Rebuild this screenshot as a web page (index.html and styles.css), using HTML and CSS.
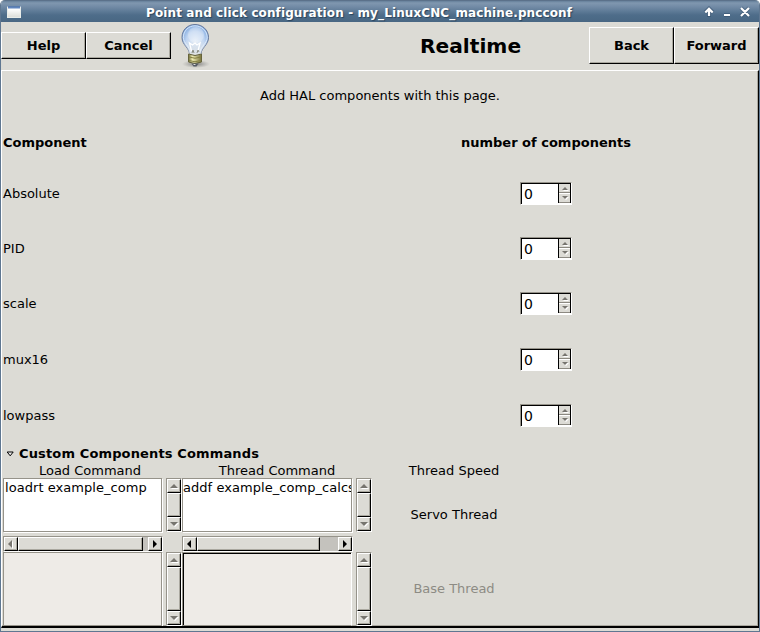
FILE: index.html
```html
<!DOCTYPE html>
<html lang="en">
<head>
<meta charset="utf-8">
<title>Point and click configuration</title>
<link rel="stylesheet" href="styles.css">
</head>
<body>
<div class="window">
  <header class="titlebar">
    <span class="winicon"></span>
    <span class="caption">Point and click configuration - my_LinuxCNC_machine.pncconf</span>
    <svg class="controls" width="50" height="22" viewBox="0 0 50 22" fill="none">
      <g stroke="#2c4763" stroke-width="4" opacity=".45"><path d="M9 16V9M5 11.500 9 7.500l4 4M24 14h6M41 7l8 8M49 7l-8 8"/></g>
      <g stroke="#fff" stroke-width="2.200"><path d="M9 15V8M5.300 11.500 9 7.800l3.700 3.700M24 14h6M41 7l8 8M49 7l-8 8"/></g>
    </svg>
  </header>
  <nav class="toolbar">
    <button class="btn">Help</button>
    <button class="btn">Cancel</button>
    <svg class="bulb" width="32" height="46" viewBox="0 0 32 46">
      <defs>
        <radialGradient id="glass" cx=".5" cy=".55" r=".6"><stop offset="0" stop-color="#e4edf8"/><stop offset=".55" stop-color="#c0d5f1"/><stop offset="1" stop-color="#719fdb"/></radialGradient>
        <linearGradient id="fade" x2="0" y2="1"><stop offset=".5" stop-color="#e3e5e5" stop-opacity="0"/><stop offset="1" stop-color="#e3e5e5"/></linearGradient>
        <linearGradient id="brass"><stop stop-color="#6e6c39"/><stop offset=".3" stop-color="#f0edb4"/><stop offset="1" stop-color="#77723c"/></linearGradient>
        <radialGradient id="shade"><stop stop-color="#555" stop-opacity=".7"/><stop offset="1" stop-color="#777" stop-opacity="0"/></radialGradient>
      </defs>
      <ellipse cx="17" cy="41" rx="14" ry="4" fill="url(#shade)"/>
      <path d="M10.500 31C10.500 25 3 22 3 14.500C3 7 8.500 1.500 16 1.500S29.500 7 29.500 14.500C29.500 22 22 25 22 31Q16 33.500 10.500 31Z" fill="url(#glass)" stroke="#65779a"/>
      <path d="M10.500 31C10.500 25 3 22 3 14.500C3 7 8.500 1.500 16 1.500S29.500 7 29.500 14.500C29.500 22 22 25 22 31Q16 33.500 10.500 31Z" fill="url(#fade)"/>
      <path d="M11.500 29C11 24 4.300 20 4.300 14.500C4.300 8 9.500 2.800 16 2.800S28.200 8 28.200 14.500C28.200 20 21.500 24 21 29" fill="none" stroke="#eaf4ff" opacity=".75"/>
      <ellipse cx="17" cy="12" rx="8" ry="8" fill="#fff" opacity=".25"/>
      <path d="M12.500 28l-2-8 3 2 2.500-2 2 2 3-2-2 8" fill="none" stroke="#fff" stroke-width="1.300"/>
      <path d="M13 30l1-3 1 3M18 30l1-3 1 2" fill="none" stroke="#8a8d83"/>
      <path d="M9.500 31Q16 34 22.500 31V39Q16 42 9.500 39Z" fill="url(#brass)" stroke="#66633a"/>
      <path d="M10 34Q16 36.500 22 34M10 37.500Q16 40 22 37.500" fill="none" stroke="#858143"/>
      <path d="M12.500 40.500h7l-2 3h-3z" fill="#555b65"/><path d="M14.500 41.500h2" stroke="#ddd"/>
    </svg>
    <h1 class="page-title">Realtime</h1>
    <button class="btn tall">Back</button>
    <button class="btn tall">Forward</button>
  </nav>
  <main class="page">
    <p class="intro">Add HAL components with this page.</p>
    <div class="row head"><b>Component</b><b>number of components</b></div>
    <div class="row"><span>Absolute</span><div class="spin"><span>0</span><i></i></div></div>
    <div class="row"><span>PID</span><div class="spin"><span>0</span><i></i></div></div>
    <div class="row"><span>scale</span><div class="spin"><span>0</span><i></i></div></div>
    <div class="row r57"><span>mux16</span><div class="spin"><span>0</span><i></i></div></div>
    <div class="row last"><span>lowpass</span><div class="spin"><span>0</span><i></i></div></div>
    <div class="expander"><svg width="9" height="7" viewBox="0 0 9 7"><path d="M1.200 1h6L4.200 4.800z" fill="#eee" stroke="#000"/></svg><b>Custom Components Commands</b></div>
    <div class="commands">
      <span class="label w1">Load Command</span><span class="label w3">Thread Command</span><span class="label c5">Thread Speed</span>
      <div class="list c1 r2">loadrt example_comp</div>
      <div class="vbar c2 r2"><i class="up"></i><i class="thumb"></i><i class="down"></i></div>
      <div class="list c3 r2 scrolled"><span>addf example_comp_calcs</span></div>
      <div class="vbar c4 r2"><i class="up"></i><i class="thumb"></i><i class="down"></i></div>
      <span class="c5 servo">Servo Thread</span>
      <div class="hbar c1 r3"><i class="left off"></i><i class="thumb t1"></i><i class="right"></i></div>
      <div class="hbar c3 r3"><i class="left"></i><i class="thumb t2"></i><i class="right"></i></div>
      <div class="list off c1 r4"></div>
      <div class="vbar c2 r4"><i class="up"></i><i class="thumb"></i><i class="down"></i></div>
      <div class="list off focus c3 r4"></div>
      <div class="vbar c4 r4"><i class="up"></i><i class="thumb"></i><i class="down"></i></div>
      <span class="c5 r4 base">Base Thread</span>
    </div>
  </main>
</div>
</body>
</html>
```
FILE: styles.css
```css
* { box-sizing: border-box; }
html { background: #fff; }
body { margin: 0; font: 13px/16px "DejaVu Sans", sans-serif; color: #000; }
.window { width: 760px; height: 632px; border: solid #5f7791; border-width: 0 1px 1px; background: #dcdbd5; border-radius: 5px 5px 0 0; overflow: hidden; }
.titlebar { height: 22px; margin: 0 -1px; display: flex; align-items: center; background: linear-gradient(#66809b 0, #8097af 2px, #718aa5 6px, #4e6d8a 14px, #496783 100%); border-top: 1px solid #5b718a; color: #fff; }
.winicon { width: 14px; height: 12px; margin-left: 7px; background: linear-gradient(#6085bd 0 1px, #fff 2px, #dedfda); border: 1px solid #e8ece9; border-top-color: #597cae; }
.caption { flex: 1; margin-left: 125px; font-size: 12px; letter-spacing: .11px; font-weight: bold; white-space: nowrap; text-shadow: 1px 1px 1px #29435c; padding-top: 2px; }
.controls { margin-right: 10px; }
.toolbar { height: 48px; display: flex; }
.btn { width: 85px; height: 27px; margin: 10px 0 0; padding: 0; font: bold 13px/16px "DejaVu Sans", sans-serif; color: #000; background: #dcdbd5; border: 1px solid; border-color: #fff #000 #000 #fff; box-shadow: inset -1px -1px #aaa89f; }
.btn.tall { height: 37px; margin-top: 5px; }
.bulb { margin: 1px 0 0 8px; }
.page-title { margin: 14px auto 0 209px; font: bold 20.2px/20px "DejaVu Sans", sans-serif; }
.page { height: 558px; border: solid; border-width: 1px 1px 2px 1px; border-color: #fff #000 #000 #fff; box-shadow: inset -1px -1px #aaa89f; padding: 0 1px; overflow: hidden; }
.intro { margin: 17px 0 0; text-align: center; }
.row { height: 55px; display: grid; grid-template-columns: 332px 1fr; align-items: center; }
.row > :last-child { margin-left: 185px; }
.row.head { height: 16px; margin: 31px 0 15px; }
.row.head > :last-child { margin-left: 126px; }
.row.r57 { height: 57px; }
.row.last { margin-bottom: 3px; }
.spin { width: 52px; height: 23px; border: 1px solid; border-color: #96938a #fff #fff #96938a; background: #fff; display: flex; line-height: 20px; box-shadow: inset 1px 1px #000; padding: 1px 0 0 1px; }
.spin span { width: 36px; padding-left: 2px; font-size: 14px; }
.spin i { width: 13px; height: 19px; border: solid #000; border-width: 0 1px; background: linear-gradient(#dcdbd5 0 8px, #8c8981 8px 9px, #fff 9px 10px, #dcdbd5 10px 18px, #8c8981 18px); position: relative; }
.spin i::before, .spin i::after { content: ""; position: absolute; left: 3px; border: solid transparent; border-width: 0 3px; }
.spin i::before { top: 3px; border-bottom: 3px solid #77756f; filter: drop-shadow(1px 1px #fff); }
.spin i::after { top: 12px; border-top: 3px solid #77756f; filter: drop-shadow(1px 1px #fff); }
.expander { display: flex; align-items: center; height: 16px; padding-left: 3px; gap: 4px; letter-spacing: .14px; }
.commands { display: grid; grid-template-columns: 160px 3px 16px 171px 3px 16px 164px; grid-template-rows: 16px 54px 4px 16px 74px; }
.c1 { grid-column: 1; } .c2 { grid-column: 3; } .c3 { grid-column: 4; } .c4 { grid-column: 6; } .c5 { grid-column: 7; }
.w1 { grid-column: 1 / 4; padding-right: 5px; } .w3 { grid-column: 4 / 7; }
.r2 { grid-row: 2; } .r3 { grid-row: 4; } .r4 { grid-row: 5; }
.label { grid-row: 1; text-align: center; line-height: 17px; }
.list { border: 1px solid #96938a; background: #fff; overflow: hidden; white-space: nowrap; padding: 1px; letter-spacing: .05px; margin-right: 1px; box-shadow: 1px 1px #fff; }
.list.scrolled { padding-left: 0; }
.list.off { background: #eeebe7; }
.list.focus { box-shadow: inset 1px 1px #000; border-right-color: #fff; }
.vbar, .hbar { display: flex; background: #c4c2bd; border: 1px solid; border-color: #96938a #fff #fff #96938a; }
.vbar { flex-direction: column; }
.vbar i, .hbar i { background: #dcdbd5; border: 1px solid; border-color: #fff #000 #000 #fff; box-shadow: inset -1px -1px #aaa89f; flex: none; }
.vbar .thumb { flex: 1; }
.up, .down { height: 14px; }
.left, .right { width: 14px; }
.up::before, .down::before, .left::before, .right::before { content: ""; display: block; width: 0; border: 4px solid transparent; }
.up::before, .down::before { border-width: 0 4px; margin: 4px 0 0 2px; filter: drop-shadow(1px 1px #fff); }
.up::before { border-bottom: 4px solid #77756f; }
.down::before { border-top: 4px solid #77756f; }
.left::before { border-right-color: #000; border-left: 0; margin: 2px 0 0 3px; }
.left.off::before { border-right-color: #77756f; filter: drop-shadow(1px 1px #fff); }
.right::before { border-left-color: #000; border-right: 0; margin: 2px 0 0 4px; }
.hbar .right { margin-left: auto; }
.hbar .t1 { width: 125px; } .hbar .t2 { width: 123px; }
.servo { grid-row: 2 / 5; }
.servo, .base { justify-self: center; align-self: center; }
.base { color: #8d8b84; }
```
